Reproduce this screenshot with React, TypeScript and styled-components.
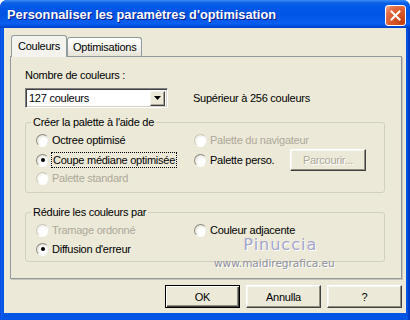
import React from 'react';
import styled, { createGlobalStyle, css } from 'styled-components';

const Global = createGlobalStyle`
  html, body { margin: 0; padding: 0; background: #ffffff; }
  body { font-family: "Liberation Sans", Arial, sans-serif; }
`;

const Window = styled.div`
  width: 410px;
  height: 320px;
  display: flex;
  flex-direction: column;
  background: linear-gradient(90deg, #0038c8 0, #1662f0 1px, #0055e5 3px, #0055e5 calc(100% - 3px), #0030b8 100%);
  border-radius: 7px 7px 0 0;
  overflow: hidden;
  font-family: "Liberation Sans", Arial, sans-serif;
  font-size: 11px;
  letter-spacing: -0.25px;
  color: #000;
`;

const TitleBar = styled.div`
  height: 28px;
  flex: none;
  display: flex;
  align-items: center;
  justify-content: space-between;
  padding: 0 4px 0 7px;
  background: linear-gradient(180deg, #3b8cf5 0, #0a5fe6 3px, #0058e8 8px, #0054e3 50%, #0a5ff0 85%, #0050dc 93%, #003dc8 100%);
`;

const Title = styled.span`
  color: #ffffff;
  font-weight: bold;
  font-size: 12.8px;
  letter-spacing: 0;
  text-shadow: 1px 1px #0a1a8a;
  margin-top: 1px;
`;

const CloseButton = styled.div`
  width: 21px;
  height: 21px;
  box-sizing: border-box;
  border: 1px solid #ffffff;
  border-radius: 3px;
  background: radial-gradient(circle at 85% 85%, #c44010 0%, #dd5a2c 50%, #e4704a 75%, #f3b49c 100%);
  display: flex;
  align-items: center;
  justify-content: center;
  margin-top: 2px;
`;

const Body = styled.div`
  flex: 1;
  margin: 0 4px 7px 4px;
  background: #ece9d8;
  display: flex;
  flex-direction: column;
  padding: 7px 4px 0 6px;
`;

const TabStrip = styled.div`
  display: flex;
  align-items: flex-end;
  height: 21px;
  padding-left: 1px;
  position: relative;
  z-index: 1;
`;

const Tab = styled.div<{ $active?: boolean }>`
  box-sizing: border-box;
  height: 19px;
  padding: 0 5px;
  display: flex;
  align-items: center;
  border: 1px solid #919b9c;
  border-bottom: none;
  border-radius: 3px 3px 0 0;
  background: linear-gradient(180deg, #ffffff 0%, #f3f2ec 60%, #e6e3d6 100%);
  ${p =>
    p.$active &&
    css`
      height: 22px;
      margin-bottom: -1px;
      padding: 0 6px 2px 6px;
      background: #f4f3ee;
    `}
`;

const Panel = styled.div`
  position: relative;
  box-sizing: border-box;
  height: 223px;
  border: 1px solid #919b9c;
  box-shadow: 1px 1px 0 #c8c5b8;
  background: #ece9d8;
  padding: 12px 16px 0 14px;
  display: flex;
  flex-direction: column;
`;

const Text = styled.span<{ $disabled?: boolean }>`
  line-height: 13px;
  white-space: nowrap;
  color: ${p => (p.$disabled ? '#aca899' : '#000')};
`;

const ComboRow = styled.div`
  display: flex;
  align-items: center;
  gap: 25px;
  margin-top: 6px;
`;

const Combo = styled.div`
  width: 143px;
  height: 20px;
  box-sizing: border-box;
  background: #ffffff;
  border: 1px solid;
  border-color: #808080 #ffffff #ffffff #808080;
  box-shadow: inset 1px 1px #404040, inset -1px -1px #d4d0c8;
  display: flex;
  align-items: center;
  justify-content: space-between;
  padding: 2px 2px 2px 3px;
`;

const DropButton = styled.div`
  width: 15px;
  height: 15px;
  box-sizing: border-box;
  background: #ece9d8;
  border: 1px solid;
  border-color: #f4f3ee #404040 #404040 #f4f3ee;
  box-shadow: inset -1px -1px #aca899;
  display: flex;
  align-items: center;
  justify-content: center;
`;

const Group = styled.fieldset<{ $top: number; $bottom: number }>`
  margin: ${p => p.$top}px 0 0 0;
  padding: 0 0 ${p => p.$bottom}px 5px;
  border: 1px solid #d0d0bf;
  border-radius: 3px;
  min-width: 0;
`;

const Legend = styled.legend`
  padding: 0 2px;
  line-height: 13px;
`;

const OptionGrid = styled.div<{ $rows: string }>`
  display: grid;
  grid-template-columns: 158px 172px;
  grid-template-rows: ${p => p.$rows};
  align-items: center;
  margin: 1px 0 0 5px;
`;

const Option = styled.div`
  display: flex;
  align-items: center;
  gap: 3px;
`;

const RadioCircle = styled.span<{ $checked?: boolean; $disabled?: boolean }>`
  width: 13px;
  height: 13px;
  box-sizing: border-box;
  border-radius: 50%;
  flex: none;
  display: flex;
  align-items: center;
  justify-content: center;
  border: 1px solid;
  border-color: #8e8b80 #e8e6dc #ffffff #8e8b80;
  background: radial-gradient(circle at 62% 62%, #ffffff 35%, #efeee8 60%, #cfccbf 100%);
  ${p =>
    p.$disabled &&
    css`
      border-color: #c9c6ba #f0eee6 #ffffff #c9c6ba;
      background: radial-gradient(circle at 62% 62%, #ffffff 40%, #f2f1ec 70%, #e0ddd2 100%);
    `}
  &::after {
    content: '';
    width: 4px;
    height: 4px;
    border-radius: 50%;
    background: #000;
    display: ${p => (p.$checked ? 'block' : 'none')};
  }
`;

const Focus = styled.span`
  outline: 1px dotted #000;
  outline-offset: 0;
  padding: 0 1px;
  line-height: 14px;
`;

const SplitOption = styled.div`
  display: flex;
  align-items: center;
  justify-content: space-between;
`;

const Button = styled.button<{ $default?: boolean; $w?: number; $h?: number }>`
  width: ${p => p.$w ?? 75}px;
  height: ${p => p.$h ?? 23}px;
  box-sizing: border-box;
  font-family: inherit;
  font-size: 11px;
  letter-spacing: -0.25px;
  color: #000;
  background: #ece9d8;
  border: 1px solid;
  border-color: #ffffff #404040 #404040 #ffffff;
  box-shadow: inset -1px -1px #8f8c80, inset 1px 1px #f6f5f0;
  padding: 0;
  ${p =>
    p.$default &&
    css`
      border: 1px solid #000;
      box-shadow: inset 1px 1px #ffffff, inset -1px -1px #404040, inset -2px -2px #8f8c80;
    `}
  &:disabled {
    color: #aca899;
    text-shadow: 1px 1px #ffffff;
  }
`;

const ButtonRow = styled.div`
  display: flex;
  justify-content: flex-end;
  gap: 6px;
  margin-top: 6px;
`;

const Watermark = styled.div`
  position: absolute;
  left: 203px;
  top: 179px;
  display: flex;
  flex-direction: column;
  align-items: center;
  pointer-events: none;
`;

const WaterName = styled.span`
  font-family: "DejaVu Sans", sans-serif;
  font-size: 16px;
  letter-spacing: 1px;
  color: #a3a4cc;
  text-shadow: 1px 1px 0 #ffffff;
  line-height: 18px;
  margin-left: 12px;
`;

const WaterUrl = styled.span`
  font-family: "DejaVu Sans", sans-serif;
  font-size: 10.5px;
  letter-spacing: 0;
  color: #8f8f9c;
  text-shadow: 1px 1px 0 #ffffff;
  line-height: 12px;
  margin-top: 3px;
`;

type RadioProps = { label: string; checked?: boolean; disabled?: boolean; focus?: boolean };

const Radio = ({ label, checked, disabled, focus }: RadioProps) => (
  <Option>
    <RadioCircle $checked={checked} $disabled={disabled} />
    {focus ? (
      <Focus>{label}</Focus>
    ) : (
      <Text $disabled={disabled}>{label}</Text>
    )}
  </Option>
);

export default function App() {
  return (
    <>
      <Global />
      <Window>
        <TitleBar>
          <Title>Personnaliser les paramètres d'optimisation</Title>
          <CloseButton>
            <svg width="11" height="11" viewBox="0 0 11 11">
              <path d="M1.5 1.5 L9.5 9.5 M9.5 1.5 L1.5 9.5" stroke="#fff" strokeWidth="2" strokeLinecap="square" />
            </svg>
          </CloseButton>
        </TitleBar>
        <Body>
          <TabStrip>
            <Tab $active>Couleurs</Tab>
            <Tab>Optimisations</Tab>
          </TabStrip>
          <Panel>
            <Text>Nombre de couleurs :</Text>
            <ComboRow>
              <Combo>
                <Text>127 couleurs</Text>
                <DropButton>
                  <svg width="7" height="4" viewBox="0 0 7 4">
                    <path d="M0 0 H7 L3.5 4 Z" fill="#000" />
                  </svg>
                </DropButton>
              </Combo>
              <Text>Supérieur à 256 couleurs</Text>
            </ComboRow>
            <Group $top={8} $bottom={6}>
              <Legend>Créer la palette à l'aide de</Legend>
              <OptionGrid $rows="20px 20px 16px">
                <Radio label="Octree optimisé" />
                <Radio label="Palette du navigateur" disabled />
                <Radio label="Coupe médiane optimisée" checked focus />
                <SplitOption>
                  <Radio label="Palette perso." />
                  <Button $w={76} $h={22} disabled>
                    Parcourir...
                  </Button>
                </SplitOption>
                <Radio label="Palette standard" disabled />
              </OptionGrid>
            </Group>
            <Group $top={13} $bottom={3}>
              <Legend>Réduire les couleurs par</Legend>
              <OptionGrid $rows="20px 18px">
                <Radio label="Tramage ordonné" disabled />
                <Radio label="Couleur adjacente" />
                <Radio label="Diffusion d'erreur" checked />
              </OptionGrid>
            </Group>
            <Watermark>
              <WaterName>Pinuccia</WaterName>
              <WaterUrl>www.maidiregrafica.eu</WaterUrl>
            </Watermark>
          </Panel>
          <ButtonRow>
            <Button $default>OK</Button>
            <Button>Annulla</Button>
            <Button>?</Button>
          </ButtonRow>
        </Body>
      </Window>
    </>
  );
}
